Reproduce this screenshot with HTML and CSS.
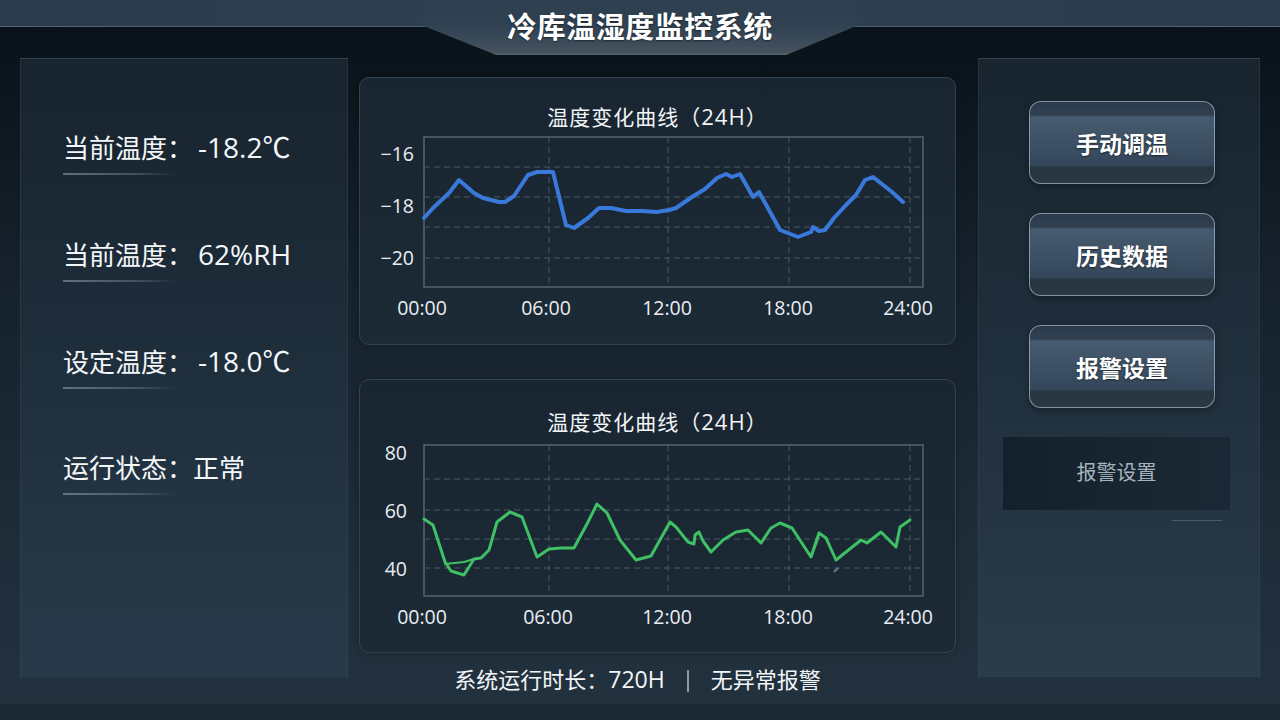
FILE: index.html
```html
<!DOCTYPE html>
<html lang="zh-CN">
<head>
    <meta charset="UTF-8">
    <meta name="viewport" content="width=device-width, initial-scale=1.0">
    <title>冷库温湿度监控系统</title>
    <link rel="stylesheet" href="styles.css">
</head>

<body>
    <header class="top-bar">
        <h1 class="title">冷库温湿度监控系统</h1>
    </header>

    <main class="dashboard">
        <section class="panel readings">
            <div class="reading">当前温度：<span class="value">-18.2℃</span></div>
            <div class="reading">当前温度：<span class="value">62%RH</span></div>
            <div class="reading">设定温度：<span class="value">-18.0℃</span></div>
            <div class="reading">运行状态：正常</div>
        </section>

        <section class="charts">
            <div class="chart-card">
                <h2>温度变化曲线（<span class="num">24H</span>）</h2>
                <svg class="chart" width="595" height="200" viewBox="0 0 595 200">
                    <rect class="plot" x="64" y="7" width="499" height="150"/>
                    <g class="grid">
                        <line x1="64" y1="37" x2="563" y2="37"/>
                        <line x1="64" y1="67" x2="563" y2="67"/>
                        <line x1="64" y1="97" x2="563" y2="97"/>
                        <line x1="64" y1="128" x2="563" y2="128"/>
                        <line x1="189" y1="7" x2="189" y2="157"/>
                        <line x1="308" y1="7" x2="308" y2="157"/>
                        <line x1="429" y1="7" x2="429" y2="157"/>
                        <line x1="550" y1="7" x2="550" y2="157"/>
                    </g>
                    <g class="y-labels">
                        <text x="54" y="26">−16</text>
                        <text x="54" y="78">−18</text>
                        <text x="54" y="130">−20</text>
                    </g>
                    <g class="x-labels">
                        <text x="62" y="180">00:00</text>
                        <text x="186" y="180">06:00</text>
                        <text x="307" y="180">12:00</text>
                        <text x="428" y="180">18:00</text>
                        <text x="548" y="180">24:00</text>
                    </g>
                    <polyline class="line-temp" points="64,88 73,78 89,63 99,50 114,63 123,68 139,72 145,72 154,66 168,45 177,42 193,42 206,95 214,98 228,88 239,78 251,78 266,81 282,81 297,82 309,80 316,78 332,67 345,59 357,48 366,44 372,47 380,44 393,67 399,62 420,100 438,107 451,102 453,97 459,101 465,100 474,88 486,75 496,65 505,50 513,47 532,62 543,72"/>
                </svg>
            </div>

            <div class="chart-card chart-card--tall">
                <h2>温度变化曲线（<span class="num">24H</span>）</h2>
                <svg class="chart" width="595" height="205" viewBox="0 0 595 205">
                    <rect class="plot" x="64" y="10" width="499" height="151"/>
                    <g class="grid">
                        <line x1="64" y1="44" x2="563" y2="44"/>
                        <line x1="64" y1="75" x2="563" y2="75"/>
                        <line x1="64" y1="104" x2="563" y2="104"/>
                        <line x1="64" y1="133" x2="563" y2="133"/>
                        <line x1="189" y1="10" x2="189" y2="161"/>
                        <line x1="308" y1="10" x2="308" y2="161"/>
                        <line x1="429" y1="10" x2="429" y2="161"/>
                        <line x1="550" y1="10" x2="550" y2="161"/>
                    </g>
                    <g class="y-labels">
                        <text x="47" y="20">80</text>
                        <text x="47" y="78">60</text>
                        <text x="47" y="136">40</text>
                    </g>
                    <g class="x-labels">
                        <text x="62" y="184">00:00</text>
                        <text x="188" y="184">06:00</text>
                        <text x="307" y="184">12:00</text>
                        <text x="428" y="184">18:00</text>
                        <text x="548" y="184">24:00</text>
                    </g>
                    <line class="line-ghost" x1="451" y1="122" x2="459" y2="102"/>
                    <line class="line-ghost" x1="474" y1="137" x2="478" y2="133"/>
                    <polyline class="line-humid thin" points="85,129 104,127 114,124"/>
                    <polyline class="line-humid" points="64,84 73,90 85,127 91,136 104,140 114,124 121,123 129,115 137,87 150,77 162,82 177,122 189,114 201,113 214,113 228,87 237,69 247,78 260,105 276,125 291,121 310,87 316,92 328,107 334,109 335,100 339,97 343,106 351,117 363,105 376,97 388,95 401,108 411,93 420,88 432,93 451,122 459,98 466,103 476,125 486,117 501,105 507,108 521,97 536,112 540,92 550,85"/>
                </svg>
            </div>

            <p class="status">系统运行时长：<span class="num">720H</span><span class="sep"></span>无异常报警</p>
        </section>

        <section class="panel controls">
            <button class="btn">手动调温</button>
            <button class="btn">历史数据</button>
            <button class="btn">报警设置</button>
            <div class="btn-flat">报警设置</div>
            <div class="flat-line"></div>
        </section>
    </main>
</body>
</html>
```

FILE: styles.css
```css
* {
    box-sizing: border-box;
}
html, body {
    margin: 0;
}
body {
    width: 1280px;
    height: 720px;
    overflow: hidden;
    font-family: "Open Sans", "Noto Sans CJK SC", sans-serif;
    color: #f2f5f8;
    background: linear-gradient(180deg, #0a1118 0, #0b141b 60px, #16222d 300px, #1f2d3a 560px, #22313e 703px, #1b2733 704px, #1c2834 100%);
}

/* header band + trapezoid title */
.top-bar {
    height: 27px;
    display: flex;
    justify-content: center;
    background: linear-gradient(90deg, #2b3b4b, #2f4052 50%, #2b3b4b);
    border-bottom: 1px solid #4f6273;
}
.title {
    flex-shrink: 0;
    width: 434px;
    height: 55px;
    margin: 0;
    line-height: 50px;
    text-align: center;
    font-family: "Noto Sans CJK SC", sans-serif;
    font-size: 29px;
    font-weight: 700;
    letter-spacing: 0.5px;
    color: #fff;
    background: linear-gradient(180deg, #2d3e4f 0, #314253 50%, #46535f 96%, #5b6772 100%);
    clip-path: polygon(0 0, 100% 0, 100% 47%, 83.7% 100%, 16.9% 100%, 0 47%);
    text-shadow: 0 1px 2px rgba(0,0,0,0.5);
}

.dashboard {
    display: flex;
    align-items: flex-start;
    gap: 11px;
    padding: 31px 20px 0;
}

.panel {
    height: 620px;
    border: 1px solid rgba(90,110,130,0.18);
    background: linear-gradient(180deg, #18242f 0, #1e2d3a 45%, #283a4a 100%);
}

/* left readings */
.readings {
    width: 328px;
    padding: 72px 0 0 42px;
    display: flex;
    flex-direction: column;
    gap: 63px;
}
.reading {
    font-size: 26px;
    line-height: 32px;
    color: #f4f7fa;
}
.reading .value {
    margin-left: 5px;
    font-size: 28px;
}
.reading::after {
    content: "";
    display: block;
    width: 112px;
    height: 2px;
    margin-top: 9px;
    background: linear-gradient(90deg, rgba(150,170,190,0.55), rgba(150,170,190,0.3) 65%, rgba(150,170,190,0));
}

/* chart column */
.charts {
    width: 597px;
    padding-top: 19px;
}
.chart-card {
    border: 1px solid #33424f;
    border-radius: 10px;
    padding: 24px 0 14px;
    background: linear-gradient(180deg, #192631, #1c2a36);
    box-shadow: 0 0 6px rgba(0,0,0,0.25);
}
.chart-card--tall {
    margin-top: 34px;
    padding: 27px 0 12px;
}
.chart-card h2 {
    margin: 0;
    font-family: "Noto Sans CJK SC", sans-serif;
    font-size: 21px;
    font-weight: 400;
    line-height: 28px;
    letter-spacing: 1px;
    text-align: center;
    color: #f2f5f8;
}
.num {
    font-family: "Open Sans", sans-serif;
    font-size: 1.05em;
}
.chart {
    display: block;
}
.plot {
    fill: none;
    stroke: #56646f;
    stroke-width: 1.5;
}
.grid line {
    stroke: #4a5865;
    stroke-width: 1;
    stroke-dasharray: 6 4;
}
.chart text {
    font-family: "Open Sans", sans-serif;
    font-size: 19.5px;
    fill: #e9eef3;
    dominant-baseline: middle;
}
.y-labels text {
    text-anchor: end;
}
.x-labels text {
    text-anchor: middle;
}
.line-temp {
    fill: none;
    stroke: #3a79dc;
    stroke-width: 4;
    stroke-linejoin: round;
    stroke-linecap: round;
}
.line-humid {
    fill: none;
    stroke: #3ec064;
    stroke-width: 3;
    stroke-linejoin: round;
    stroke-linecap: round;
}
.line-humid.thin {
    stroke-width: 2;
}
.line-ghost {
    stroke: #6f7a85;
    stroke-width: 2;
}

.status {
    margin: 12px 40px 0 0;
    font-size: 22px;
    line-height: 28px;
    text-align: center;
    color: #f2f5f8;
}
.sep {
    display: inline-block;
    width: 2px;
    height: 22px;
    margin: 0 22px;
    vertical-align: -4px;
    background: #8f9aa5;
}

/* right controls */
.controls {
    width: 282px;
    margin-left: 11px;
    padding-top: 42px;
    display: flex;
    flex-direction: column;
    align-items: center;
    background: linear-gradient(180deg, #18252f 0, #1f2e3b 45%, #2a3b4a 100%);
}
.btn {
    width: 186px;
    height: 83px;
    margin: 0 0 29px 6px;
    border: 1px solid rgba(190,205,220,0.6);
    border-radius: 12px;
    font-family: "Noto Sans CJK SC", sans-serif;
    font-size: 23px;
    font-weight: 700;
    color: #fff;
    text-shadow: 0 1px 2px rgba(0,0,0,0.5);
    background: linear-gradient(180deg, #2b3a4a 0, #304050 16%, #475b70 19%, #3d5064 50%, #34475a 78%, #28353f 81%, #2a3845 100%);
    box-shadow: 0 2px 6px rgba(0,0,0,0.35);
    cursor: pointer;
}
.btn-flat {
    width: 227px;
    height: 73px;
    margin: 0 5px 0 0;
    line-height: 70px;
    text-align: center;
    font-family: "Noto Sans CJK SC", sans-serif;
    font-size: 20px;
    color: #a7b2bd;
    background: linear-gradient(90deg, #14212c, #1a2935);
}
.flat-line {
    align-self: flex-end;
    width: 50px;
    height: 1px;
    margin: 10px 37px 0 0;
    background: rgba(140,160,180,0.35);
}
```
